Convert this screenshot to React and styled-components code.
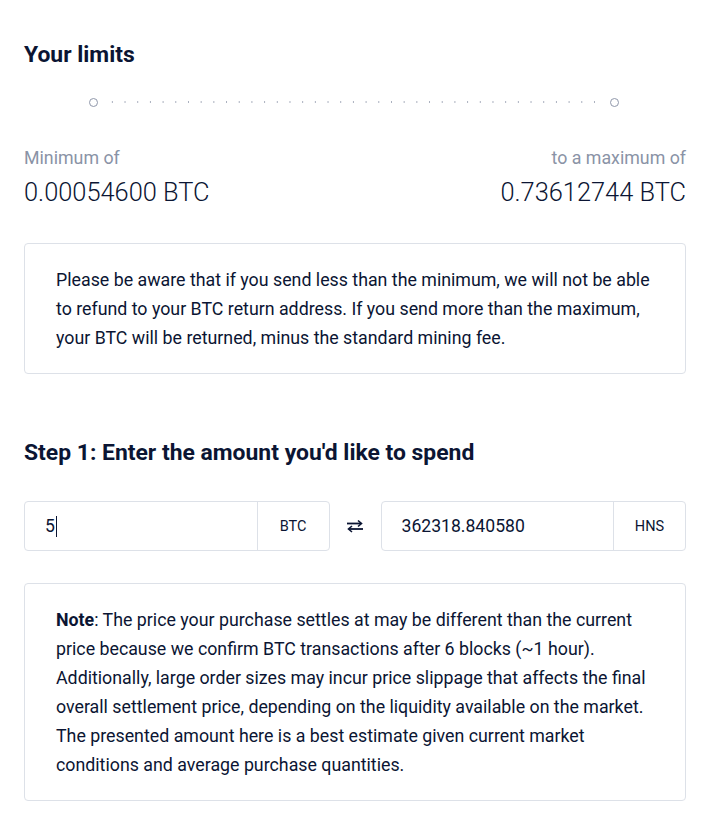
import React from 'react';
import styled, { createGlobalStyle } from 'styled-components';

const GlobalStyle = createGlobalStyle`
  body {
    margin: 0;
    background: #ffffff;
    font-family: Roboto, "Liberation Sans", sans-serif;
    color: #0b1533;
  }
`;

const Page = styled.div`
  padding: 40px 34px 30px 24px;
  width: 662px;
`;

const Heading = styled.h2`
  margin: 0;
  font-size: 22.9px;
  font-weight: 700;
  line-height: 30px;
  color: #0b1533;
`;

const Slider = styled.div`
  display: flex;
  align-items: center;
  margin: 25px 67px 0 65px;
  height: 14px;
`;

const Knob = styled.span`
  width: 7px;
  height: 7px;
  border-radius: 50%;
  border: 1.5px solid #8f97aa;
  flex: none;
`;

const Dots = styled.span`
  flex: 1;
  height: 2px;
  margin: 0 4px;
  background-image: radial-gradient(circle, #a8aebd 0.8px, transparent 1px);
  background-size: 12.7px 2px;
  background-position: 4px 0;
`;

const Limits = styled.div`
  display: flex;
  justify-content: space-between;
  margin-top: 38px;
`;

const LimitCol = styled.div`
  display: flex;
  flex-direction: column;
  align-items: ${(p) => (p.right ? 'flex-end' : 'flex-start')};
`;

const LimitLabel = styled.div`
  font-size: 17.8px;
  line-height: 22px;
  color: #8a93a6;
`;

const LimitValue = styled.div`
  margin-top: 9px;
  font-size: 25.4px;
  font-weight: 300;
  line-height: 28px;
  color: #0b1533;
`;

const InfoBox = styled.div`
  margin-top: ${(p) => p.top}px;
  border: 1px solid #dde1e8;
  border-radius: 4px;
  padding: 21px 31px;
  font-size: 17.8px;
  line-height: 29px;
  color: #0b1533;

  b {
    font-weight: 700;
  }
`;

const StepHeading = styled(Heading)`
  margin-top: 64px;
`;

const InputRow = styled.div`
  display: flex;
  align-items: center;
  margin-top: 33px;
`;

const Field = styled.div`
  flex: 1;
  display: flex;
  height: 50px;
  box-sizing: border-box;
  border: 1px solid #dde1e8;
  border-radius: 4px;
`;

const FieldValue = styled.div`
  flex: 1;
  display: flex;
  align-items: center;
  padding-left: 20px;
  font-size: 17.6px;
  color: #0b1533;
`;

const Caret = styled.span`
  display: inline-block;
  width: 1px;
  height: 21px;
  margin-left: 1px;
  background: #0b1533;
`;

const Suffix = styled.div`
  width: 71px;
  display: flex;
  align-items: center;
  justify-content: center;
  border-left: 1px solid #dde1e8;
  font-size: 14.5px;
  color: #0b1533;
`;

const SwapButton = styled.div`
  width: 51px;
  display: flex;
  justify-content: center;
  align-items: center;
  flex: none;
`;

const SwapIcon = () => (
  <svg width="18" height="14" viewBox="0 0 18 14" fill="none">
    <path d="M1 4.5H15" stroke="#0b1533" strokeWidth="1.8" />
    <path d="M12 1.5L15.5 4.5L12 7.5" stroke="#0b1533" strokeWidth="1.6" fill="none" />
    <path d="M3 10H17" stroke="#0b1533" strokeWidth="1.8" />
    <path d="M6 7L2.5 10L6 13" stroke="#0b1533" strokeWidth="1.6" fill="none" />
  </svg>
);

const App = () => (
  <>
    <GlobalStyle />
    <Page>
      <Heading>Your limits</Heading>
      <Slider>
        <Knob />
        <Dots />
        <Knob />
      </Slider>
      <Limits>
        <LimitCol>
          <LimitLabel>Minimum of</LimitLabel>
          <LimitValue>0.00054600 BTC</LimitValue>
        </LimitCol>
        <LimitCol right>
          <LimitLabel>to a maximum of</LimitLabel>
          <LimitValue>0.73612744 BTC</LimitValue>
        </LimitCol>
      </Limits>
      <InfoBox top={37}>
        Please be aware that if you send less than the minimum, we will not be able
        to refund to your BTC return address. If you send more than the maximum,
        your BTC will be returned, minus the standard mining fee.
      </InfoBox>
      <StepHeading>Step 1: Enter the amount you'd like to spend</StepHeading>
      <InputRow>
        <Field>
          <FieldValue>
            5<Caret />
          </FieldValue>
          <Suffix>BTC</Suffix>
        </Field>
        <SwapButton>
          <SwapIcon />
        </SwapButton>
        <Field>
          <FieldValue>362318.840580</FieldValue>
          <Suffix>HNS</Suffix>
        </Field>
      </InputRow>
      <InfoBox top={32}>
        <b>Note</b>: The price your purchase settles at may be different than the current
        price because we confirm BTC transactions after 6 blocks (~1 hour).
        Additionally, large order sizes may incur price slippage that affects the final
        overall settlement price, depending on the liquidity available on the market.
        The presented amount here is a best estimate given current market
        conditions and average purchase quantities.
      </InfoBox>
    </Page>
  </>
);

export default App;
